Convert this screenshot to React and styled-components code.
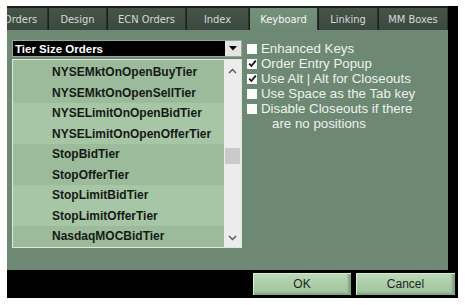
import React, { useState } from 'react';
import styled, { createGlobalStyle } from 'styled-components';

const Global = createGlobalStyle`
  html, body { margin: 0; padding: 0; background: #ffffff; }
  body { font-family: "Liberation Sans", Arial, sans-serif; }
`;

const Window = styled.div`
  margin: 6px 0 0 7px;
  width: 451px;
  height: 292px;
  background: #000;
  display: flex;
  flex-direction: column;
`;

const TabBar = styled.div`
  height: 24px;
  padding-top: 2px;
  box-sizing: border-box;
  background: #1c211d;
  display: flex;
  overflow: hidden;
  width: 441px;
`;

const Tab = styled.div`
  flex: none;
  width: ${({ w }) => w}px;
  margin-left: ${({ shift }) => shift || 0}px;
  margin-right: 1px;
  display: flex;
  align-items: center;
  justify-content: center;
  font-family: "DejaVu Sans Condensed", "DejaVu Sans", sans-serif;
  font-size: 11px;
  color: ${({ active }) => (active ? '#f4f6f4' : '#d4dad5')};
  background: ${({ active }) =>
    active ? 'linear-gradient(#74917c, #6d8974)' : 'linear-gradient(#465449, #3b483f)'};
  border-right: 1px solid #2a312b;
`;

const Panel = styled.div`
  width: 441px;
  height: 240px;
  background: #6d8873;
  box-sizing: border-box;
  padding: 10px 0 0 5px;
  display: flex;
  gap: 5px;
`;

const LeftCol = styled.div`
  width: 230px;
  display: flex;
  flex-direction: column;
  gap: 2px;
`;

const Combo = styled.div`
  height: 17px;
  background: #000;
  border: 1px solid #9aa79d;
  box-sizing: border-box;
  display: flex;
  align-items: center;
  justify-content: space-between;
`;

const ComboText = styled.span`
  color: #fff;
  font-weight: bold;
  font-size: 11.5px;
  padding-left: 2px;
`;

const ComboButton = styled.div`
  width: 16px;
  height: 15px;
  background: #e4e4e4;
  display: flex;
  align-items: center;
  justify-content: center;
`;

const ListBox = styled.div`
  height: 189px;
  border: 1px solid #dfe7df;
  box-sizing: border-box;
  display: flex;
  background: #9dbd9d;
`;

const Rows = styled.div`
  flex: 1;
  padding-top: 2px;
  display: flex;
  flex-direction: column;
`;

const Row = styled.div`
  height: 20.5px;
  flex: none;
  display: flex;
  align-items: center;
  padding-left: 39px;
  background: ${({ light }) => (light ? '#a6c6a6' : '#9bbb9b')};
  font-weight: bold;
  font-size: 12px;
  color: #161a16;
`;

const ScrollBar = styled.div`
  width: 17px;
  background: #ececec;
  display: flex;
  flex-direction: column;
  align-items: center;
  justify-content: space-between;
  padding: 8px 0 6px;
  box-sizing: border-box;
`;

const Thumb = styled.div`
  width: 15px;
  height: 16px;
  background: #cacaca;
  margin-top: 74px;
  margin-bottom: auto;
`;

const RightCol = styled.div`
  padding-top: 1px;
  display: flex;
  flex-direction: column;
`;

const Option = styled.label`
  display: flex;
  align-items: center;
  gap: 4px;
  height: 15px;
  font-size: 13.3px;
  color: #eef2ee;
  padding-left: ${({ indent }) => indent || 0}px;
`;

const Box = styled.span`
  width: 10px;
  height: 10px;
  background: #fbfbfb;
  display: flex;
  align-items: center;
  justify-content: center;
  flex: none;
`;

const ButtonBar = styled.div`
  flex: 1;
  display: flex;
  justify-content: flex-end;
  align-items: flex-start;
  padding: 3px 3px 0 0;
  gap: 5px;
`;

const Button = styled.button`
  width: ${({ w }) => w}px;
  height: 22px;
  border: none;
  padding: 0;
  font-family: "Liberation Sans", Arial, sans-serif;
  font-size: 12px;
  color: #1e241e;
  background: linear-gradient(#bddbba, #a9cba6 60%, #9fc29c);
  box-shadow: inset 1px 1px 0 #d6ecd3, inset -3px -2px 2px #84a582;
`;

const Chevron = ({ up }) => (
  <svg width="9" height="6" viewBox="0 0 9 6">
    <path
      d={up ? 'M1 5 L4.5 1.5 L8 5' : 'M1 1 L4.5 4.5 L8 1'}
      fill="none"
      stroke="#555"
      strokeWidth="1.4"
    />
  </svg>
);

const Check = () => (
  <svg width="9" height="9" viewBox="0 0 9 9">
    <path d="M1.2 4.6 L3.4 7 L7.8 1.6" fill="none" stroke="#111" strokeWidth="1.7" />
  </svg>
);

const tabs = [
  { label: 'Orders', w: 53, shift: -13 },
  { label: 'Design', w: 57 },
  { label: 'ECN Orders', w: 77 },
  { label: 'Index', w: 61 },
  { label: 'Keyboard', w: 67, active: true },
  { label: 'Linking', w: 58 },
  { label: 'MM Boxes', w: 68 },
];

const tiers = [
  'NYSEMktOnOpenBuyTier',
  'NYSEMktOnOpenSellTier',
  'NYSELimitOnOpenBidTier',
  'NYSELimitOnOpenOfferTier',
  'StopBidTier',
  'StopOfferTier',
  'StopLimitBidTier',
  'StopLimitOfferTier',
  'NasdaqMOCBidTier',
];

export default function App() {
  const [opts] = useState([
    { label: 'Enhanced Keys', on: false },
    { label: 'Order Entry Popup', on: true },
    { label: 'Use Alt | Alt for Closeouts', on: true },
    { label: 'Use Space as the Tab key', on: false },
    { label: 'Disable Closeouts if there', on: false },
  ]);

  return (
    <>
      <Global />
      <Window>
        <TabBar>
          {tabs.map((t) => (
            <Tab key={t.label} w={t.w} shift={t.shift} active={t.active}>
              {t.label}
            </Tab>
          ))}
        </TabBar>
        <Panel>
          <LeftCol>
            <Combo>
              <ComboText>Tier Size Orders</ComboText>
              <ComboButton>
                <svg width="8" height="5" viewBox="0 0 8 5">
                  <path d="M0 0 L8 0 L4 4.5 Z" fill="#000" />
                </svg>
              </ComboButton>
            </Combo>
            <ListBox>
              <Rows>
                {tiers.map((t, i) => (
                  <Row key={t} light={Math.floor(i / 2) % 2 === 1}>
                    {t}
                  </Row>
                ))}
              </Rows>
              <ScrollBar>
                <Chevron up />
                <Thumb />
                <Chevron />
              </ScrollBar>
            </ListBox>
          </LeftCol>
          <RightCol>
            {opts.map((o) => (
              <Option key={o.label}>
                <Box>{o.on && <Check />}</Box>
                {o.label}
              </Option>
            ))}
            <Option indent={25}>are no positions</Option>
          </RightCol>
        </Panel>
        <ButtonBar>
          <Button w={98}>OK</Button>
          <Button w={99}>Cancel</Button>
        </ButtonBar>
      </Window>
    </>
  );
}
